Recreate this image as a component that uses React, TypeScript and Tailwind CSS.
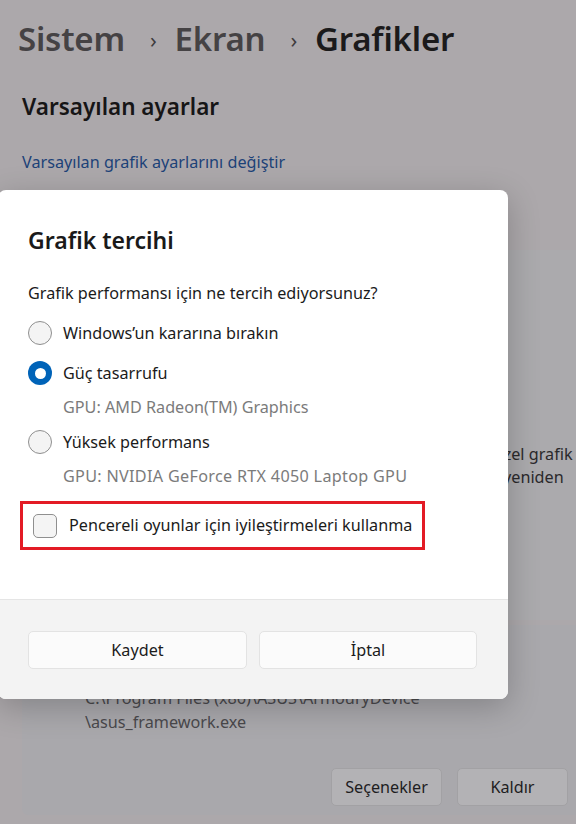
import React from "react";

function Radio({ checked }: { checked?: boolean }) {
  if (checked) {
    return (
      <span className="flex h-6 w-6 shrink-0 items-center justify-center rounded-full bg-[#0063b8]">
        <span className="h-[11px] w-[11px] rounded-full bg-white" />
      </span>
    );
  }
  return <span className="h-6 w-6 shrink-0 rounded-full border border-[#8f8f8f] bg-[#f4f4f4]" />;
}

function RadioRow({ label, checked }: { label: string; checked?: boolean }) {
  return (
    <div className="flex h-10 items-center gap-[11px]">
      <Radio checked={checked} />
      <span className="text-[#1b1b1b]">{label}</span>
    </div>
  );
}

export default function App() {
  return (
    <div className="relative h-[824px] w-[576px] overflow-hidden bg-[#aca8ab] font-['Noto_Sans',sans-serif] text-[16.2px]">
      {/* settings page underneath the dialog */}
      <div className="flex h-[61px] items-end pl-[18px] text-[33px] font-semibold leading-[44px] tracking-[-0.2px]">
        <span className="text-[#454244]">Sistem</span>
        <span className="ml-[25px] mr-[18px] text-[22px] font-normal text-[#3e3b3d]">›</span>
        <span className="text-[#454244]">Ekran</span>
        <span className="ml-[25px] mr-[18px] text-[22px] font-normal text-[#3e3b3d]">›</span>
        <span className="text-[#1b1a1b]">Grafikler</span>
      </div>
      <div className="mt-[31px] pl-[22px] text-[22.5px] font-semibold leading-[30px] text-[#161516]">
        Varsayılan ayarlar
      </div>
      <div className="mt-[29px] pl-[22px] leading-[22px] text-[#1c4278]">
        Varsayılan grafik ayarlarını değiştir
      </div>

      <div className="ml-[22px] mt-[77px] h-[370px] rounded-l-[6px] bg-[#abaaad]">
        <div className="pl-[472px] pt-[193px] leading-[23px] text-[#2a292b]">
          <div className="whitespace-nowrap">özel grafik</div>
          <div className="whitespace-nowrap pl-[9px]">yeniden</div>
        </div>
      </div>

      <div className="ml-[22px] mt-[5px] h-[190px] rounded-l-[6px] bg-[#a9a8ac]">
        <div className="pl-[63px] pt-[61px] leading-[24px] text-[#4a494c]">
          <div className="whitespace-nowrap">C:\Program Files (x86)\ASUS\ArmouryDevice</div>
          <div className="whitespace-nowrap">\asus_framework.exe</div>
        </div>
        <div className="mt-[34px] flex justify-end gap-[15px] pr-[8px]">
          <div className="flex h-[38px] w-[111px] items-center justify-center rounded-[5px] border border-[#a2a1a4] bg-[#b3b2b5] text-[#1e1d1f]">
            Seçenekler
          </div>
          <div className="flex h-[38px] w-[111px] items-center justify-center rounded-[5px] border border-[#a2a1a4] bg-[#b3b2b5] text-[#1e1d1f]">
            Kaldır
          </div>
        </div>
      </div>

      {/* modal dialog */}
      <div className="absolute left-[-2px] top-[190px] w-[510px] overflow-hidden rounded-[8px] bg-white shadow-[0_8px_32px_rgba(0,0,0,0.22)]">
        <div className="h-[409px] pl-[30px] pt-[34px]">
          <div className="text-[23px] font-semibold leading-[32px] text-[#1a1a1a]">Grafik tercihi</div>
          <div className="mt-[25px] leading-[24px] text-[#1b1b1b]">
            Grafik performansı için ne tercih ediyorsunuz?
          </div>
          <div className="mt-[8px]">
            <RadioRow label="Windows’un kararına bırakın" />
            <RadioRow label="Güç tasarrufu" checked />
          </div>
          <div className="mt-[2px] pl-[35px] leading-[24px] text-[#7b7b7b]">GPU: AMD Radeon(TM) Graphics</div>
          <div className="mt-[3px]">
            <RadioRow label="Yüksek performans" />
          </div>
          <div className="mt-[2px] pl-[35px] leading-[24px] tracking-[0.3px] text-[#7b7b7b]">
            GPU: NVIDIA GeForce RTX 4050 Laptop GPU
          </div>
          <div className="-ml-[8px] mt-[13px] flex h-[49px] w-[405px] items-center gap-[12px] border-[3px] border-[#e31b25] pl-[10px]">
            <span className="h-6 w-6 shrink-0 rounded-[5px] border border-[#8f8f8f] bg-[#f4f4f4]" />
            <span className="whitespace-nowrap text-[#1b1b1b]">Pencereli oyunlar için iyileştirmeleri kullanma</span>
          </div>
        </div>
        <div className="flex h-[100px] gap-[12px] border-t border-[#e5e5e5] bg-[#f3f3f3] pl-[30px] pt-[31px]">
          <div className="flex h-[38px] w-[219px] items-center justify-center rounded-[5px] border border-[#e3e3e3] bg-[#fbfbfb] text-[#1b1b1b]">
            Kaydet
          </div>
          <div className="flex h-[38px] w-[218px] items-center justify-center rounded-[5px] border border-[#e3e3e3] bg-[#fbfbfb] text-[#1b1b1b]">
            İptal
          </div>
        </div>
      </div>
    </div>
  );
}
